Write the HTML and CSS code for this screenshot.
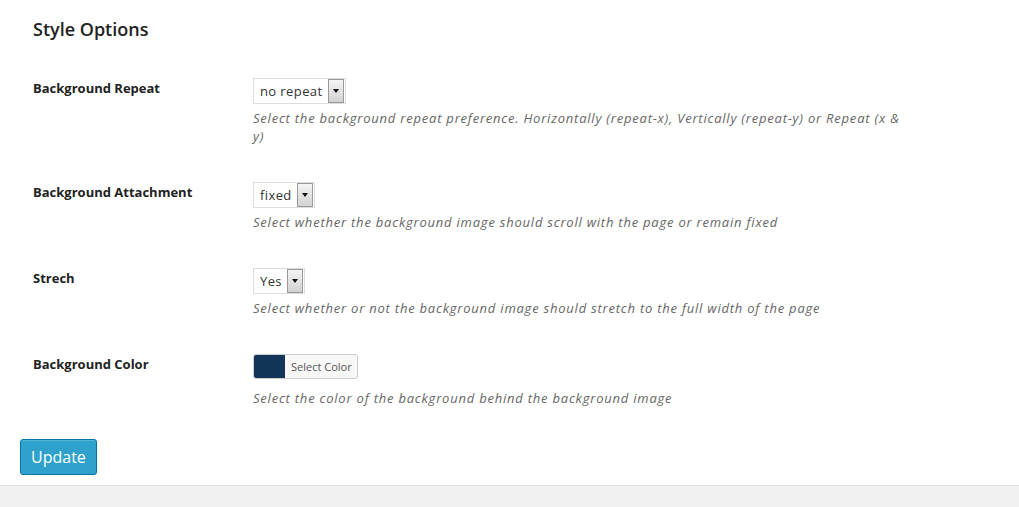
FILE: index.html
```html
<!DOCTYPE html>
<html>
<head>
<meta charset="utf-8">
<link rel="stylesheet" href="styles.css">
</head>
<body>
<div class="wrap">
  <h2 class="title">Style Options</h2>
  <div class="form">
    <div class="row">
      <div class="label">Background Repeat</div>
      <div class="field">
        <div class="select"><span class="val">no repeat</span><span class="arrow"></span></div>
        <p class="desc">Select the background repeat preference. Horizontally (repeat-x), Vertically (repeat-y) or Repeat (x &amp; y)</p>
      </div>
    </div>
    <div class="row">
      <div class="label">Background Attachment</div>
      <div class="field">
        <div class="select"><span class="val">fixed</span><span class="arrow"></span></div>
        <p class="desc">Select whether the background image should scroll with the page or remain fixed</p>
      </div>
    </div>
    <div class="row">
      <div class="label">Strech</div>
      <div class="field">
        <div class="select"><span class="val">Yes</span><span class="arrow"></span></div>
        <p class="desc">Select whether or not the background image should stretch to the full width of the page</p>
      </div>
    </div>
    <div class="row">
      <div class="label">Background Color</div>
      <div class="field">
        <div class="color-btn"><span class="swatch"></span><span class="color-text">Select Color</span></div>
        <p class="desc color-desc">Select the color of the background behind the background image</p>
      </div>
    </div>
  </div>
  <button class="update">Update</button>
</div>
<div class="footer"></div>
</body>
</html>
```
FILE: styles.css
```css
html, body {
  margin: 0;
  padding: 0;
  background: #f1f1f1;
}
body {
  font-family: "Open Sans", "DejaVu Sans", sans-serif;
  color: #222;
}
.wrap {
  background: #fff;
  padding: 14px 20px 10px 20px;
  border-bottom: 1px solid #e1e1e1;
}
.title {
  margin: 0 0 17px 13px;
  font-size: 18px;
  line-height: 30px;
  font-weight: 600;
  color: #222;
}
.form {
  padding-left: 13px;
}
.row {
  display: grid;
  grid-template-columns: 220px 1fr;
  padding: 17px 0 20px;
}
.label {
  font-size: 13px;
  font-weight: 700;
  line-height: 20px;
  color: #222;
}
.field {
  display: flex;
  flex-direction: column;
  align-items: flex-start;
}
.select {
  display: flex;
  align-items: stretch;
  height: 26px;
  box-sizing: border-box;
  border: 1px solid #ddd;
  background: #fff;
  padding: 0 1px 0 0;
}
.val {
  font-size: 13px;
  line-height: 24px;
  letter-spacing: 0.4px;
  color: #333;
  padding: 0 5px 0 6px;
}
.arrow {
  width: 16px;
  box-sizing: border-box;
  border: 1px solid #999;
  background: linear-gradient(#f4f4f4, #d2d2d2);
  display: flex;
  align-items: center;
  justify-content: center;
}
.arrow::after {
  content: "";
  border-left: 3.5px solid transparent;
  border-right: 3.5px solid transparent;
  border-top: 4px solid #111;
}
.desc {
  margin: 5px 0 0;
  width: 652px;
  font-size: 13px;
  line-height: 18px;
  letter-spacing: 0.78px;
  font-style: italic;
  color: #666;
}
.color-btn {
  display: flex;
  height: 25px;
  box-sizing: border-box;
  border: 1px solid #ccc;
  border-radius: 3px;
  background: #f7f7f7;
  overflow: hidden;
}
.swatch {
  width: 31px;
  background: #133459;
}
.color-text {
  font-size: 11px;
  line-height: 23px;
  color: #555;
  padding: 0 5px 0 6px;
}
.color-desc {
  margin-top: 10px;
}
.update {
  margin-top: 12px;
  height: 36px;
  padding: 0 10px;
  font-family: "Open Sans", sans-serif;
  font-size: 16px;
  color: #fff;
  background: #2ea2cc;
  border: 1px solid #0074a2;
  border-radius: 3px;
  box-shadow: inset 0 1px 0 rgba(120, 200, 230, 0.5);
}
.footer {
  height: 40px;
}
```
